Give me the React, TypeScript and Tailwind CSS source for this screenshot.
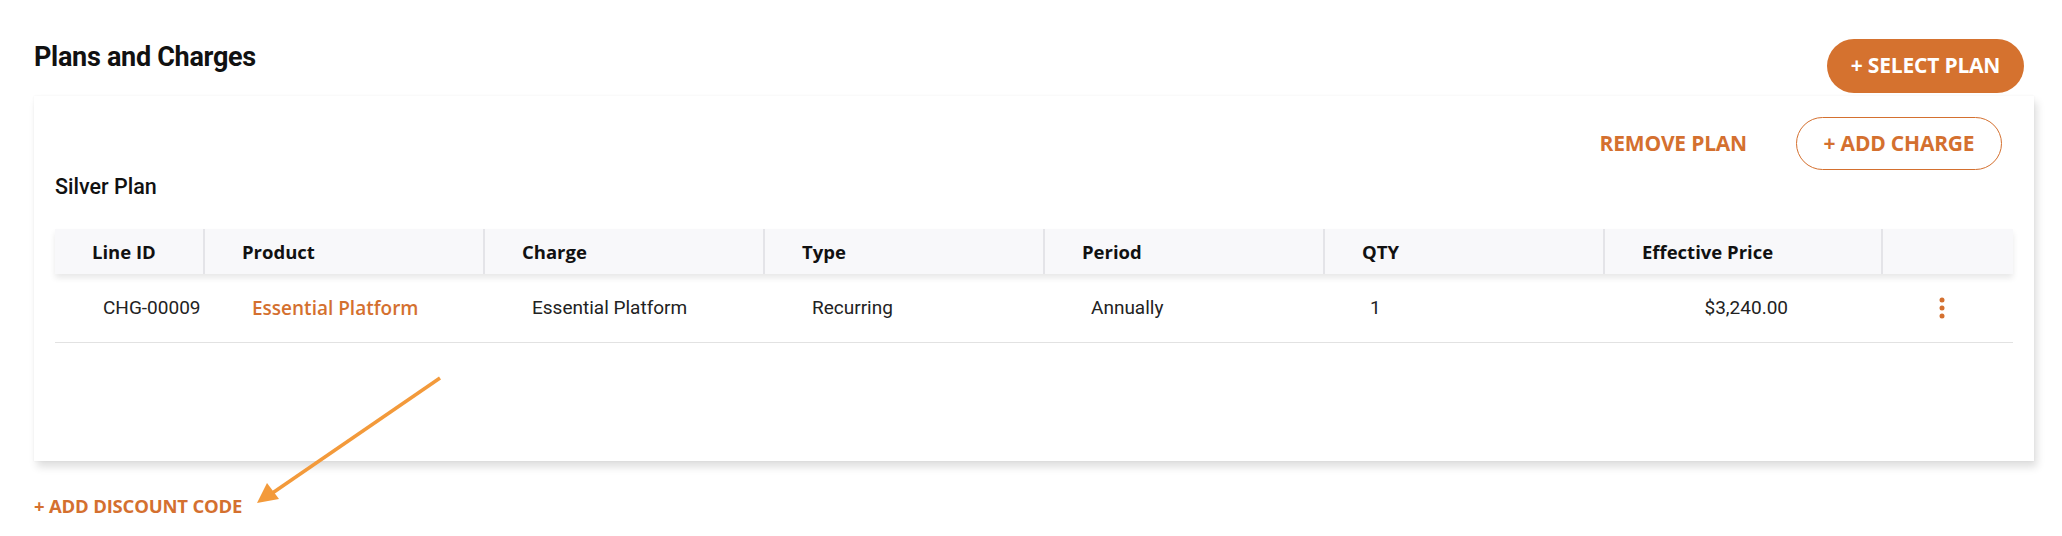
import React from "react";

const ORANGE = "text-[#d4702f]";

const columns = [
  "Line ID",
  "Product",
  "Charge",
  "Type",
  "Period",
  "QTY",
  "Effective Price",
  "",
];

function KebabIcon() {
  return (
    <svg width="8" height="24" viewBox="0 0 8 24" className="block">
      <circle cx="4" cy="4" r="2.5" fill="#d4702f" />
      <circle cx="4" cy="12" r="2.5" fill="#d4702f" />
      <circle cx="4" cy="20" r="2.5" fill="#d4702f" />
    </svg>
  );
}

export default function App() {
  return (
    <div className="relative w-[2062px] h-[536px] bg-white font-['Roboto',sans-serif] text-[#111]">
      {/* header */}
      <div className="flex items-start justify-between pl-[34px] pr-[38px] pt-[39px]">
        <h1 className="mt-[3px] text-[27px] leading-[30px] font-bold tracking-[-0.3px]">
          Plans and Charges
        </h1>
        <button className="h-[54px] w-[197px] rounded-full bg-[#d5722f] text-white font-['Open_Sans',sans-serif] font-bold text-[21px] tracking-[-0.2px]">
          + SELECT PLAN
        </button>
      </div>

      {/* plan card */}
      <div className="ml-[34px] mt-[3px] w-[2000px] h-[365px] bg-white px-[21px] shadow-[3px_6px_8px_rgba(0,0,0,0.13),0_0_2px_rgba(0,0,0,0.06)]">
        <div className="flex items-center justify-end gap-[49px] pt-[21px] pr-[11px]">
          <span className={`font-['Open_Sans',sans-serif] font-bold text-[21px] tracking-[-0.2px] ${ORANGE}`}>
            REMOVE PLAN
          </span>
          <button className={`h-[53px] w-[206px] rounded-full border border-[#d4702f] bg-white font-['Open_Sans',sans-serif] font-bold text-[21px] tracking-[-0.2px] ${ORANGE}`}>
            + ADD CHARGE
          </button>
        </div>

        <div className="mt-[5px] text-[21.5px] leading-[24px] font-medium">Silver Plan</div>

        <div className="mt-[30px]">
          {/* table head */}
          <div className="grid grid-cols-[148px_280px_280px_280px_280px_280px_278px_132px] h-[45px] bg-[#f8f8fa] shadow-[0_4px_6px_rgba(0,0,0,0.09)] relative">
            {columns.map((c, i) => (
              <div
                key={i}
                className={`flex items-center pl-[37px] font-['Open_Sans',sans-serif] font-bold text-[18.5px] text-[#111] ${
                  i > 0 ? "border-l-2 border-[#e4e4e8]" : ""
                }`}
              >
                {c}
              </div>
            ))}
          </div>

          {/* table row */}
          <div className="grid grid-cols-[148px_280px_280px_280px_280px_280px_278px_132px] h-[69px] items-center border-b border-[#e2e2e2] text-[19px] text-[#222]">
            <div className="pl-[48px]">CHG-00009</div>
            <div className={`pl-[49px] font-['Open_Sans',sans-serif] font-semibold ${ORANGE}`}>
              Essential Platform
            </div>
            <div className="pl-[49px]">Essential Platform</div>
            <div className="pl-[49px]">Recurring</div>
            <div className="pl-[48px]">Annually</div>
            <div className="pl-[47px]">1</div>
            <div className="text-right pr-[93px]">$3,240.00</div>
            <div className="pl-[57px]">
              <KebabIcon />
            </div>
          </div>
        </div>
      </div>

      <div className={`ml-[34px] mt-[33px] font-['Open_Sans',sans-serif] font-bold text-[18.5px] leading-[24px] tracking-[-0.2px] ${ORANGE}`}>
        + ADD DISCOUNT CODE
      </div>

      {/* annotation arrow */}
      <svg className="absolute left-0 top-0 pointer-events-none" width="2062" height="536">
        <line x1="440" y1="378" x2="271" y2="494" stroke="#f39a3b" strokeWidth="3.5" />
        <polygon points="257,503 267,483 279,499" fill="#f39a3b" />
      </svg>
    </div>
  );
}
